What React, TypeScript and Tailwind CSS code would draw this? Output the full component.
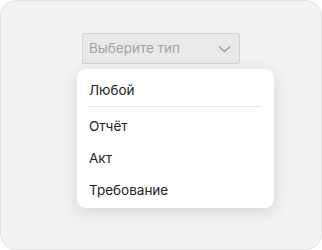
import React from "react";

export default function App() {
  const items = ["Отчёт", "Акт", "Требование"];
  return (
    <div className="w-[322px] h-[250px] bg-white" style={{ fontFamily: "Inter, 'Noto Sans', sans-serif" }}>
      <div className="w-full h-full rounded-[16px] border border-[#e2e2e2] bg-[#f3f3f3] flex flex-col items-center pt-[32px]">
        <div className="relative">
          <div className="w-[158px] h-[31px] border border-[#d2d2d2] bg-[#e9e9e9] rounded-[2px] flex items-center justify-between pl-[6px] pr-[8px]">
            <span className="text-[13.5px] text-[#a3a3a3] leading-[17px]">Выберите тип</span>
            <svg width="13" height="8" viewBox="0 0 13 8" fill="none">
              <path d="M1 1.5 L6.5 6.5 L12 1.5" stroke="#9a9a9a" strokeWidth="1.3" />
            </svg>
          </div>
          <div className="absolute left-[-5px] top-[36px] w-[197px] bg-white rounded-[9px] shadow-[0_4px_18px_rgba(0,0,0,0.13)] pt-[6px] pb-[2px]">
            <div className="h-[31px] flex items-center px-[12px] text-[13.5px] leading-[17px] text-[#222]">Любой</div>
            <div className="mx-[12px] mb-[3px] h-px bg-[#e6e6e6]" />
            {items.map((t) => (
              <div key={t} className="h-[32px] flex items-center px-[12px] text-[13.5px] leading-[17px] text-[#222]">{t}</div>
            ))}
          </div>
        </div>
      </div>
    </div>
  );
}
